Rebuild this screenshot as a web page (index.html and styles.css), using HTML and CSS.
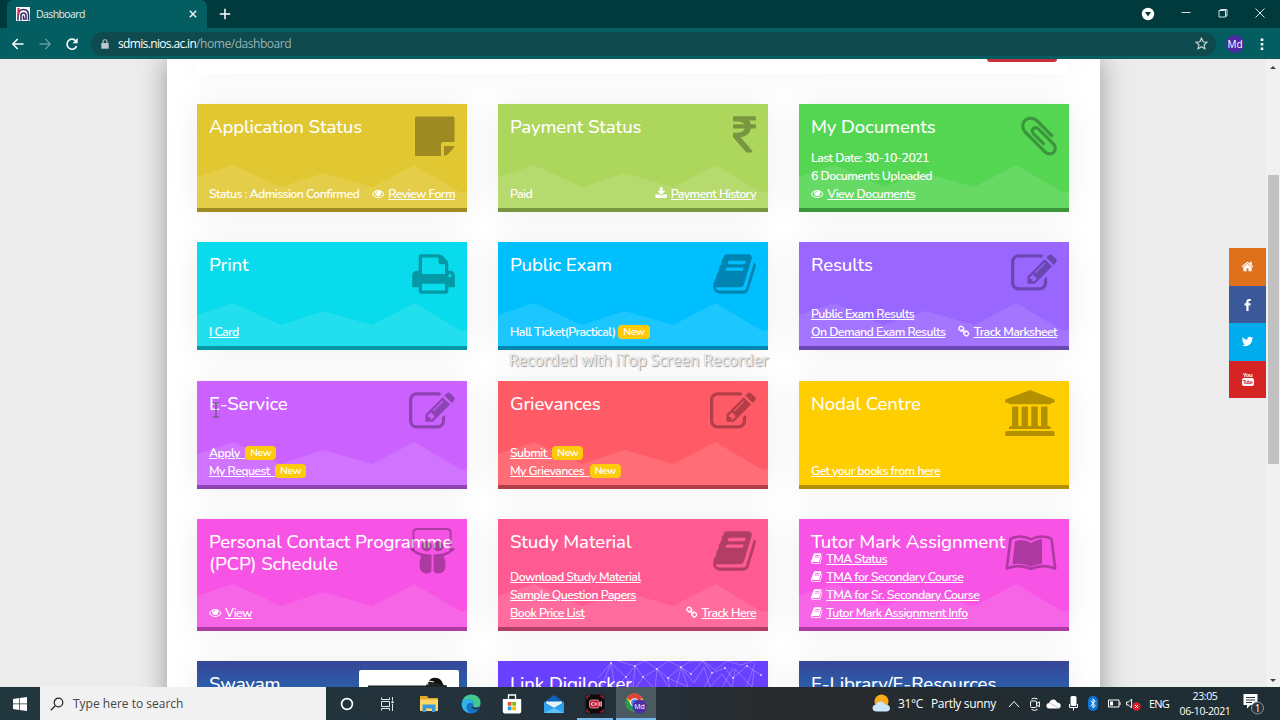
FILE: index.html
```html
<!DOCTYPE html>
<html lang="en">

<head>
    <meta charset="UTF-8">
    <meta name="viewport" content="width=device-width, initial-scale=1.0">
    <title>Dashboard</title>
    <link rel="stylesheet" href="styles.css">
</head>

<body>
    <!-- icon symbols -->
    <svg class="symbols" width="0" height="0">
        <symbol id="eye" viewBox="0 0 1792 1792"><path d="M1664 960q-152-236-381-353 61 104 61 225 0 185-131.5 316.5t-316.5 131.5-316.5-131.5-131.5-316.5q0-121 61-225-229 117-381 353 133 205 333.5 326.5t434.5 121.5 434.5-121.5 333.5-326.5zm-720-384q0-20-14-34t-34-14q-125 0-214.5 89.5t-89.5 214.5q0 20 14 34t34 14 34-14 14-34q0-86 61-147t147-61q20 0 34-14t14-34zm848 384q0 34-20 69-140 230-376.5 368.5t-499.5 138.5-499.5-139-376.5-368q-20-35-20-69t20-69q140-229 376.5-368t499.5-139 499.5 139 376.5 368q20 35 20 69z"/></symbol>
        <symbol id="edit" viewBox="0 0 1792 1792"><path d="M888 1184l116-116-152-152-116 116v56h96v96h56zm440-720q-16-16-33 1l-350 350q-17 17-1 33t33-1l350-350q17-17 1-33zm80 594v190q0 119-84.5 203.5t-203.5 84.5h-832q-119 0-203.5-84.5t-84.5-203.5v-832q0-119 84.5-203.5t203.5-84.5h832q63 0 117 25 15 7 18 23 3 17-9 29l-49 49q-14 14-32 8-23-6-45-6h-832q-66 0-113 47t-47 113v832q0 66 47 113t113 47h832q66 0 113-47t47-113v-126q0-13 9-22l64-64q15-15 35-7t20 29zm-96-738l288 288-672 672h-288v-288zm444 132l-92 92-288-288 92-92q28-28 68-28t68 28l152 152q28 28 28 68t-28 68z"/></symbol>
        <symbol id="book" viewBox="64 0 1664 1792"><path d="M1703 478q40 57 18 129l-275 906q-19 64-76.5 107.5t-122.5 43.5h-923q-77 0-148.5-53.5t-99.5-131.5q-24-67-2-127 0-4 3-27t4-37q1-8-3-21.5t-3-19.5q2-11 8-21t16.5-23.5 16.5-23.5q23-38 45-91.5t30-91.5q3-10 .5-30t-.5-28q3-11 17-28t17-23q21-36 42-92t25-90q1-9-2.5-32t.5-28q4-13 22-30.5t22-22.5q19-26 42.5-84.5t27.5-96.5q1-8-3-25.5t-2-26.5q2-8 9-18t18-23 17-21q8-12 16.5-30.5t15-35 16-36 19.5-32 26.5-23.5 36-11.5 47.5 5.5l-1 3q38-9 51-9h761q74 0 114 56t18 130l-274 906q-36 119-71.5 153.5t-128.5 34.5h-869q-27 0-38 15-11 16-1 43 24 70 144 70h923q29 0 56-15.5t35-41.5l300-987q7-22 5-57 38 15 59 43zm-1064 2q-4 13 2 22.5t20 9.5h608q13 0 25.5-9.5t16.5-22.5l21-64q4-13-2-22.5t-20-9.5h-608q-13 0-25.5 9.5t-16.5 22.5zm-83 256q-4 13 2 22.5t20 9.5h608q13 0 25.5-9.5t16.5-22.5l21-64q4-13-2-22.5t-20-9.5h-608q-13 0-25.5 9.5t-16.5 22.5z"/></symbol>
        <symbol id="print" viewBox="64 0 1664 1792"><path d="M448 1536h896v-256h-896v256zm0-640h896v-384h-160q-40 0-68-28t-28-68v-160h-640v640zm1152 64q0-26-19-45t-45-19-45 19-19 45 19 45 45 19 45-19 19-45zm128 0v416q0 13-9.5 22.5t-22.5 9.5h-224v160q0 40-28 68t-68 28h-960q-40 0-68-28t-28-68v-160h-224q-13 0-22.5-9.5t-9.5-22.5v-416q0-79 56.5-135.5t135.5-56.5h64v-544q0-40 28-68t68-28h672q40 0 88 20t76 48l152 152q28 28 48 76t20 88v256h64q79 0 135.5 56.5t56.5 135.5z"/></symbol>
        <symbol id="rupee" viewBox="448 0 898 1792"><path d="M1345 470v102q0 14-9 23t-23 9h-168q-23 144-129 234t-276 110q167 178 459 536 14 16 4 34-8 18-29 18h-195q-16 0-25-12-306-367-498-571-9-9-9-22v-127q0-13 9.5-22.5t22.5-9.5h112q132 0 212.5-43t102.5-125h-427q-14 0-23-9t-9-23v-102q0-14 9-23t23-9h413q-57-113-268-113h-145q-13 0-22.5-9.5t-9.5-22.5v-133q0-14 9-23t23-9h832q14 0 23 9t9 23v102q0 14-9 23t-23 9h-233q47 61 64 144h171q14 0 23 9t9 23z"/></symbol>
        <symbol id="clip" viewBox="192 0 1408 1792"><path d="M1596 1385q0 117-79 196t-196 79q-135 0-235-100l-777-776q-113-115-113-271 0-159 110-270t269-111q158 0 273 113l605 606q10 10 10 22 0 16-30.5 46.5t-46.5 30.5q-13 0-23-10l-606-607q-79-77-181-77-106 0-179 75t-73 181q0 105 76 181l776 777q63 63 145 63 64 0 106-42t42-106q0-82-63-145l-581-581q-26-24-60-24-29 0-48 19t-19 48q0 32 25 59l410 410q10 10 10 22 0 16-31 47t-47 31q-12 0-22-10l-410-410q-63-61-63-149 0-82 57-139t139-57q88 0 149 63l581 581q100 98 100 235z"/></symbol>
        <symbol id="download" viewBox="0 0 1792 1792"><path d="M1344 1344q0-26-19-45t-45-19-45 19-19 45 19 45 45 19 45-19 19-45zm256 0q0-26-19-45t-45-19-45 19-19 45 19 45 45 19 45-19 19-45zm128-224v320q0 40-28 68t-68 28h-1472q-40 0-68-28t-28-68v-320q0-40 28-68t68-28h465l135 136q58 56 136 56t136-56l136-136h464q40 0 68 28t28 68zm-325-569q17 41-14 70l-448 448q-18 19-45 19t-45-19l-448-448q-31-29-14-70 17-39 59-39h256v-448q0-26 19-45t45-19h256q26 0 45 19t19 45v448h256q42 0 59 39z"/></symbol>
        <symbol id="chain" viewBox="64 0 1664 1792"><path d="M1520 1216q0-40-28-68l-208-208q-28-28-68-28-42 0-72 32 3 3 19 18.5t21.5 21.5 15 19 13 25.5 3.5 27.5q0 40-28 68t-68 28q-15 0-27.5-3.5t-25.5-13-19-15-21.5-21.5-18.5-19q-33 31-33 73 0 40 28 68l206 207q27 27 68 27 40 0 68-26l147-146q28-28 28-67zm-703-705q0-40-28-68l-206-207q-28-28-68-28-39 0-68 27l-147 146q-28 28-28 67 0 40 28 68l208 208q27 27 68 27 42 0 72-31-3-3-19-18.5t-21.5-21.5-15-19-13-25.5-3.5-27.5q0-40 28-68t68-28q15 0 27.5 3.5t25.5 13 19 15 21.5 21.5 18.5 19q33-31 33-73zm895 705q0 120-85 203l-147 146q-83 83-203 83-121 0-204-85l-206-207q-83-83-83-203 0-123 88-209l-88-88q-86 88-208 88-120 0-204-84l-208-208q-84-84-84-204t85-203l147-146q83-83 203-83 121 0 204 85l206 207q83 83 83 203 0 123-88 209l88 88q86-88 208-88 120 0 204 84l208 208q84 84 84 204z"/></symbol>
        <symbol id="home" viewBox="0 0 1792 1792"><path d="M1472 992v480q0 26-19 45t-45 19h-384v-384h-256v384h-384q-26 0-45-19t-19-45v-480q0-1 .5-3t.5-3l575-474 575 474q1 2 1 6zm223-69l-62 74q-8 9-21 11h-3q-13 0-21-7l-692-577-692 577q-12 8-24 7-13-2-21-11l-62-74q-8-10-7-23.5t11-21.5l719-599q32-26 76-26t76 26l244 204v-195q0-14 9-23t23-9h192q14 0 23 9t9 23v408l219 182q10 8 11 21.5t-7 23.5z"/></symbol>
        <symbol id="facebook" viewBox="0 0 1792 1792"><path d="M1343 140v264h-157q-86 0-116 36t-30 108v189h293l-39 296h-254v759h-306v-759h-255v-296h255v-218q0-186 104-288.5t277-102.5q147 0 228 12z"/></symbol>
        <symbol id="twitter" viewBox="0 0 1792 1792"><path d="M1684 408q-67 98-162 167 1 14 1 42 0 130-38 259.5t-115.5 248.5-184.5 210.5-258 146-323 54.5q-271 0-496-145 35 4 78 4 225 0 401-138-105-2-188-64.5t-114-159.5q33 5 61 5 43 0 85-11-112-23-185.5-111.5t-73.5-205.5v-4q68 38 146 41-66-44-105-115t-39-154q0-88 44-163 121 149 294.5 238.5t371.5 99.5q-8-38-8-74 0-134 94.5-228.5t228.5-94.5q140 0 236 102 109-21 205-78-37 115-142 178 93-10 186-50z"/></symbol>
        <symbol id="note" viewBox="0 0 40 46"><path d="M1.5 3.5H38q1.5 0 1.5 1.5v24H28.500q-2.500 0-2.500 2.500V43H1.500Q0 43 0 41.500V5Q0 3.500 1.500 3.500zM29 33h10.300q-.5 2-1.600 3.200l-5 5q-1.500 1.400-3.700 1.600z"/></symbol>
        <symbol id="bank" viewBox="0 0 50 47"><path d="M25 0l24.500 9.500v3.200h-3.300q0 1.600-1.600 1.600H5.200q-1.600 0-1.600-1.600H.3V9.500zM7 16.500h6.300V36h3.300V16.500H23V36h3.300V16.500h6.500V36H36V16.500h6.500V36h1.600q1.600 0 1.600 1.600v1.500H3.900v-1.500Q3.900 36 5.500 36H7zM1.900 41h46q1.600 0 1.600 1.600V46H.3v-3.400Q.3 41 1.900 41z"/></symbol>
        <symbol id="leanpub" viewBox="0 0 52 36"><path fill="none" stroke="currentColor" stroke-width="2.600" stroke-linejoin="round" d="M26 4.300Q19 .5 12 1.800q-3.500.5-6.500 2L1.800 33.500Q14 28.500 26 33.800q12-5.300 24.200-.3L46.500 3.800q-3-1.500-6.500-2-7-1.300-14 2.500z"/><path d="M26 8.200q5-3.700 11-4v24.500q-6 .3-11 3-8.500-4-18.500-2.500L10 6.500q8-3.500 16 1.700z"/></symbol>
        <symbol id="slideshare" viewBox="0 0 45 47"><path fill="none" stroke="currentColor" stroke-width="1.900" d="M3 23V5Q3 1 7 1h30q4 0 4 4v18"/><circle cx="16.500" cy="18.500" r="5.300"/><circle cx="28.500" cy="18.500" r="5.300"/><path d="M0 20.500q-.5 1.200 1 2.600Q5 27 11 28.500q-3 9-1 14 2 4.500 7.500 4 4-.5 4-4V27.200q-4.500-.5-8-.9Q7 25.500 1.500 20.500zM45 20.500q.5 1.200-1 2.600-4 3.900-10 5.400 3 9 1 14-2 4.500-7.500 4-4-.5-4-4V27.200q4.500-.5 8-.9 6.500-.8 12-5.800z"/></symbol>
        <symbol id="wave" viewBox="0 0 270 43" preserveAspectRatio="none"><path d="M0 12L36 0l48 22 42-14 49 14L217 0l47 28 6-2v17H0z"/></symbol>
    </svg>

    <!-- browser header -->
    <div class="tabstrip">
        <div class="tab">
            <svg width="14" height="14" viewBox="0 0 14 14"><path fill="#fff" d="M0 0h14v14H0z"/><path fill="none" stroke="#302966" stroke-width="1.500" d="M2 13.500V8q.5-5.500 5.500-5.500T12.500 8v5.500M5 13.500V8.500q0-2.500 2.500-2.500T10 8.500v3.500H7.500V8.500"/><path fill="#d72a49" d="M1.500 1h2v7h-2z"/></svg>
            <span>Dashboard</span>
            <svg class="tab-close" width="8" height="8" viewBox="0 0 8 8"><path stroke="#e8f2f2" stroke-width="1.500" d="M.8.8l6.400 6.400M7.200.8L.8 7.200"/></svg>
        </div>
        <svg class="new-tab" width="12" height="12" viewBox="0 0 12 12"><path stroke="#fff" stroke-width="1.500" d="M6 .8v10.400M.8 6h10.400"/></svg>
        <div class="window-btns">
            <svg width="14" height="14" viewBox="0 0 14 14"><circle cx="7" cy="7" r="6.200" fill="#fff"/><path fill="#003a3d" d="M4 5h6L7 9.500z"/></svg>
            <svg width="12" height="12" viewBox="0 0 12 12"><path stroke="#d5e1e1" d="M1.500 4.500h9"/></svg>
            <svg width="12" height="12" viewBox="0 0 12 12"><path fill="none" stroke="#d5e1e1" d="M2 2.500h6.500V9H2zM3.500 2.500v-1h6.500v6.500H8.500"/></svg>
            <svg width="12" height="12" viewBox="0 0 12 12"><path stroke="#d5e1e1" d="M1.500.5l9 9M10.500.5l-9 9"/></svg>
        </div>
    </div>
    <div class="toolbar">
        <svg width="14" height="14" viewBox="0 0 14 14"><path fill="none" stroke="#fff" stroke-width="1.500" d="M12.500 7H2M6.700 2L1.800 7l4.900 5"/></svg>
        <svg class="fwd" width="14" height="14" viewBox="0 0 14 14"><path fill="none" stroke="#66999c" stroke-width="1.300" d="M1.500 7H12M7.300 2l4.900 5-4.900 5"/></svg>
        <svg width="14" height="14" viewBox="0 0 14 14"><path fill="none" stroke="#fff" stroke-width="1.600" d="M11.600 9.200A5 5 0 1 1 10.900 4"/><path fill="#fff" d="M12.700 1v5.200H7.500z"/></svg>
        <div class="address">
            <svg width="8" height="10" viewBox="0 0 8 10"><path fill="#bcc9cc" d="M.3 4h7.400v5.700H.3z"/><path fill="none" stroke="#bcc9cc" stroke-width="1.100" d="M2 4V2.600Q2 .8 4 .8t2 1.800V4"/></svg>
            <p><b>sdmis.nios.ac.in</b>/home/dashboard</p>
            <svg class="star" width="13" height="13" viewBox="0 0 13 13"><path fill="none" stroke="#c9d6d8" stroke-width="1.200" d="M6.500 1.200l1.600 3.600 3.900.4-2.900 2.600.8 3.900-3.400-2-3.400 2 .8-3.900L1 5.200l3.900-.4z"/></svg>
        </div>
        <div class="avatar">Md</div>
        <svg class="dots" width="4" height="14" viewBox="0 0 4 14"><path fill="#fff" d="M.7 1.500h2.600v2.400H.7zM.7 6h2.600v2.400H.7zM.7 10.500h2.600v2.400H.7z"/></svg>
    </div>

    <!-- page -->
    <div class="page">
        <div class="panel">
            <div class="profile"><span class="logout"></span></div>
            <div class="cards">
                <div class="card mustard">
                    <svg class="wave"><use href="#wave"/></svg>
                    <svg class="icon" width="40"><use href="#note"/></svg>
                    <h3>Application Status</h3>
                    <div class="line"><span>Status : Admission Confirmed</span><span><svg class="fa"><use href="#eye"/></svg> <a href="#">Review Form</a></span></div>
                </div>
                <div class="card lime">
                    <svg class="wave"><use href="#wave"/></svg>
                    <svg class="icon" width="23"><use href="#rupee"/></svg>
                    <h3>Payment Status</h3>
                    <div class="line"><span>Paid</span><span><svg class="fa"><use href="#download"/></svg> <a href="#">Payment History</a></span></div>
                </div>
                <div class="card green">
                    <svg class="wave"><use href="#wave"/></svg>
                    <svg class="icon" width="36"><use href="#clip"/></svg>
                    <h3>My Documents</h3>
                    <div class="line"><span>Last Date: 30-10-2021</span></div>
                    <div class="line"><span>6 Documents Uploaded</span></div>
                    <div class="line"><span><svg class="fa"><use href="#eye"/></svg> <a href="#">View Documents</a></span></div>
                </div>
                <div class="card cyan">
                    <svg class="wave"><use href="#wave"/></svg>
                    <svg class="icon" width="43"><use href="#print"/></svg>
                    <h3>Print</h3>
                    <div class="line"><a href="#">I Card</a></div>
                </div>
                <div class="card blue">
                    <svg class="wave"><use href="#wave"/></svg>
                    <svg class="icon" width="43"><use href="#book"/></svg>
                    <h3>Public Exam</h3>
                    <div class="line"><span>Hall Ticket(Practical) <i class="badge">New</i></span></div>
                </div>
                <div class="card violet">
                    <svg class="wave"><use href="#wave"/></svg>
                    <svg class="icon" width="46"><use href="#edit"/></svg>
                    <h3>Results</h3>
                    <div class="line"><a href="#">Public Exam Results</a></div>
                    <div class="line"><a href="#">On Demand Exam Results</a><span><svg class="fa chain"><use href="#chain"/></svg> <a href="#">Track Marksheet</a></span></div>
                </div>
                <div class="card purple">
                    <svg class="wave"><use href="#wave"/></svg>
                    <svg class="icon" width="46"><use href="#edit"/></svg>
                    <h3>E-Service</h3>
                    <div class="line"><a href="#">Apply&nbsp; <i class="badge">New</i></a></div>
                    <div class="line"><a href="#">My Request&nbsp; <i class="badge">New</i></a></div>
                </div>
                <div class="card coral">
                    <svg class="wave"><use href="#wave"/></svg>
                    <svg class="icon" width="46"><use href="#edit"/></svg>
                    <h3>Grievances</h3>
                    <div class="line"><a href="#">Submit&nbsp; <i class="badge">New</i></a></div>
                    <div class="line"><a href="#">My Grievances&nbsp; <i class="badge">New</i></a></div>
                </div>
                <div class="card yellow">
                    <svg class="icon bank" width="50"><use href="#bank"/></svg>
                    <h3>Nodal Centre</h3>
                    <div class="line"><a href="#">Get your books from here</a></div>
                </div>
                <div class="card pink tall">
                    <svg class="wave"><use href="#wave"/></svg>
                    <svg class="icon" width="45"><use href="#slideshare"/></svg>
                    <h3>Personal Contact Programme (PCP) Schedule</h3>
                    <div class="line"><span><svg class="fa"><use href="#eye"/></svg> <a href="#">View</a></span></div>
                </div>
                <div class="card rose tall">
                    <svg class="wave"><use href="#wave"/></svg>
                    <svg class="icon" width="43"><use href="#book"/></svg>
                    <h3>Study Material</h3>
                    <div class="line"><a href="#">Download Study Material</a></div>
                    <div class="line"><a href="#">Sample Question Papers</a></div>
                    <div class="line"><a href="#">Book Price List</a><span><svg class="fa chain"><use href="#chain"/></svg> <a href="#">Track Here</a></span></div>
                </div>
                <div class="card pink tall">
                    <svg class="wave"><use href="#wave"/></svg>
                    <svg class="icon lean" width="52"><use href="#leanpub"/></svg>
                    <h3>Tutor Mark Assignment</h3>
                    <div class="line"><span><svg class="fa chain"><use href="#book"/></svg> <a href="#">TMA Status</a></span></div>
                    <div class="line"><span><svg class="fa chain"><use href="#book"/></svg> <a href="#">TMA for Secondary Course</a></span></div>
                    <div class="line"><span><svg class="fa chain"><use href="#book"/></svg> <a href="#">TMA for Sr. Secondary Course</a></span></div>
                    <div class="line"><span><svg class="fa chain"><use href="#book"/></svg> <a href="#">Tutor Mark Assignment Info</a></span></div>
                </div>
                <div class="card navy">
                    <h3>Swayam</h3>
                    <div class="swayam-logo">
                        <svg width="100" height="40" viewBox="0 0 100 40"><path fill="#111" d="M69 13q2-6 9-5 4 .500 6 6l2 4H68l-1-3z"/><path stroke="#fff" d="M69 11l6 1M68 14l7 1"/><path fill="#222" d="M9 15.500h59l4-3 16 3v3H9z"/></svg>
                    </div>
                </div>
                <div class="card indigo">
                    <svg class="net" width="170" height="27" viewBox="0 0 170 27"><g fill="none" stroke="#fff" stroke-opacity=".42" stroke-width=".6"><path d="M0 17l13-15 15 14 9-11 8 11 14-8 11 9 13-11 10 7 12-13 9 12 13-5 8 10 14-12 14 9M3 27l10-25 4 25 11-11 8 13 9-13 12 12 2-20 13 20-2-11 20 9-7-20 13 16 10-16 6 20 12-13 10 14 3-19 17 18 2-17M20 0l17 5L47 0l12 8L70 0l13 6 10-6 12 0 12 9 12-9 14 4 12-4M37 5l-2 22M83 6l-5 21M114 12l-8 15M135 7l-11 20M157 2l-9 25"/></g><g fill="#fff" fill-opacity=".75"><circle cx="13" cy="2" r="1"/><circle cx="28" cy="16" r="1"/><circle cx="37" cy="5" r="1"/><circle cx="45" cy="16" r="1"/><circle cx="59" cy="8" r="1"/><circle cx="70" cy="17" r="1"/><circle cx="83" cy="6" r="1"/><circle cx="93" cy="13" r="1"/><circle cx="114" cy="12" r="1"/><circle cx="127" cy="7" r="1"/><circle cx="135" cy="17" r="1"/><circle cx="149" cy="5" r="1"/><circle cx="163" cy="14" r="1"/></g></svg>
                    <h3>Link Digilocker</h3>
                </div>
                <div class="card navy">
                    <h3>E-Library/E-Resources</h3>
                </div>
            </div>
        </div>
        <div class="social">
            <a class="s-home" href="#"><svg><use href="#home"/></svg></a>
            <a class="s-fb" href="#"><svg><use href="#facebook"/></svg></a>
            <a class="s-tw" href="#"><svg><use href="#twitter"/></svg></a>
            <a class="s-yt" href="#"><span>You</span><b>Tube</b></a>
        </div>
        <div class="scrollbar"><i class="up"></i><span class="thumb"></span><i class="down"></i></div>
        <div class="watermark">Recorded with iTop Screen Recorder</div>
        <svg class="cursor" width="8" height="16" viewBox="0 0 8 16"><path fill="none" stroke="#6b5a70" stroke-width="1.300" d="M.8 1q2.600-.3 3.200 1 .6-1.300 3.200-1M4 2v12M.8 15q2.600.3 3.200-1 .6 1.300 3.200 1"/></svg>
    </div>

    <!-- taskbar -->
    <div class="taskbar">
        <div class="start"><svg width="14" height="14" viewBox="0 0 14 14"><path fill="#fff" d="M0 2l6-.9v5.500H0zM6.700 1L14 0v6.600H6.700zM0 7.300h6v5.600L0 12zM6.700 7.300H14V14l-7.300-1z"/></svg></div>
        <div class="search">
            <svg width="14" height="14" viewBox="0 0 14 14"><circle cx="8.500" cy="5.500" r="4.300" fill="none" stroke="#222" stroke-width="1.200"/><path stroke="#222" stroke-width="1.300" d="M5.400 8.600L.8 13.200"/></svg>
            <span>Type here to search</span>
        </div>
        <div class="apps">
            <div class="app"><svg width="14" height="14" viewBox="0 0 14 14"><circle cx="7" cy="7" r="5.400" fill="none" stroke="#fff" stroke-width="1.700"/></svg></div>
            <div class="app"><svg width="14" height="14" viewBox="0 0 14 14"><path fill="none" stroke="#e3e7e8" d="M.5.5v2h8v-2M.5 4.500h8v5h-8zM.5 13.500v-2h8v2M11.500 0v3.500M11.500 7v7"/><path fill="#fff" d="M10.500 4.200h2v2h-2z"/></svg></div>
            <div class="app"><svg width="20" height="18" viewBox="0 0 20 18"><path fill="#e5a82c" d="M1 1h7l1.500 2H19v6H1z"/><path fill="#ffd766" d="M1 4.500h18V16H1z"/><path fill="#3c98dc" d="M3.500 9.500h13V17H13v-3.500H7V17H3.500z"/></svg></div>
            <div class="app"><svg width="20" height="20" viewBox="0 0 20 20"><circle cx="10" cy="10" r="9.500" fill="#1673c8"/><path fill="#43c98d" d="M1 7.500Q3.500.5 10.500.5q9 .8 9 8.500 0 4-5 4.500-3-.3-2-2.500 1-5-4-5.500Q4 5.300 1 7.500z"/><path fill="#2fb4e6" d="M.6 9.500q2-5.700 8-4 4 1.300 3.800 4.500Q8 7 6 11t3 8Q.5 18 .6 9.500z"/><path fill="#24343c" d="M12 12.500q2.500 2.500 7 .3-.8 1.800-2 2.500-5 1-6.500-2.300z"/></svg></div>
            <div class="app"><svg width="20" height="20" viewBox="0 0 20 20"><path fill="none" stroke="#fff" stroke-width="1.300" d="M6.500 6V1h7v5"/><path fill="#fff" d="M.8 5h18.400v12.500q0 2-2 2H2.800q-2 0-2-2z"/><path fill="#e8532b" d="M5.800 8h3.700v3.700H5.800z"/><path fill="#7fba00" d="M10.300 8H14v3.700h-3.700z"/><path fill="#1f9ce8" d="M5.800 12.500h3.700v3.700H5.800z"/><path fill="#ffb900" d="M10.300 12.500H14v3.700h-3.700z"/></svg></div>
            <div class="app"><svg width="20" height="20" viewBox="0 0 20 20"><path fill="#0f63b8" d="M0 8l10-7 10 7v11H0z"/><path fill="#e7f3fb" d="M2 7.500h16v2L10 14 2 9.500z"/><path fill="#2ea2ea" d="M0 8l10 6 10-6v11H0z"/><path fill="#5ec3f6" d="M10 14L0 19h20z"/></svg></div>
            <div class="app open"><svg width="20" height="20" viewBox="0 0 20 20"><rect x=".5" y=".5" width="19" height="19" rx="3" fill="#0d0a0b"/><path fill="none" stroke="#d52a3a" d="M2 5V2h3M15 2h3v3M18 15v3h-3M5 18H2v-3"/><rect x="4.500" y="6" width="9.500" height="8" rx="2" fill="#c32038" stroke="#f3a0ab" stroke-width=".8"/><path fill="#e8455a" stroke="#fff" stroke-width=".6" d="M14 9l2.500-1.500v5L14 11z"/><path fill="none" stroke="#fff" stroke-width=".8" d="M8.500 8.800Q6.300 8 6.300 10t2.200 1.300M9.500 8.500l2.500 3M12 8.500l-2.500 3"/></svg></div>
            <div class="app open current"><svg width="22" height="21" viewBox="0 0 22 21"><circle cx="9.500" cy="9.500" r="9" fill="#f6c630"/><path fill="#df4437" d="M1.700 5A9 9 0 0 1 17.300 5L9.500 9.500z"/><path fill="#249a57" d="M1.700 5a9 9 0 0 0 6.800 13.500l3-6-6-1z"/><circle cx="9.500" cy="9.500" r="4.300" fill="#fff"/><circle cx="9.500" cy="9.500" r="3.300" fill="#3f83ee"/><circle cx="14.500" cy="13.500" r="7" fill="#4b2fa8"/><text x="14.500" y="16.300" text-anchor="middle" class="mini">Md</text></svg></div>
        </div>
        <div class="tray">
            <svg width="19" height="19" viewBox="0 0 19 19"><circle cx="9.500" cy="7.500" r="7" fill="#f8a91e"/><path fill="#c9e7f7" d="M4 17.500q-3.500-.5-3.500-3.500T4 10.500q1-3 4.500-3 3.300 0 4.500 3 5 .2 5 3.700 0 3-3.500 3.300z"/></svg>
            <span class="temp">31°C</span><span class="sunny">Partly sunny</span>
            <svg class="t-up" width="12" height="8" viewBox="0 0 12 8"><path fill="none" stroke="#fff" d="M1 7l5-5.500L11 7"/></svg>
            <svg class="t-meet" width="10" height="14" viewBox="0 0 10 14"><rect x=".6" y="4" width="6" height="6.500" rx="1" fill="none" stroke="#fff"/><path fill="none" stroke="#fff" d="M7 6.300l2.400-1.500v5L7 8.300M1.500 2q3-1.800 6 0M1.500 12.500q3 1.800 6 0"/></svg>
            <svg class="t-cloud" width="15" height="11" viewBox="0 0 15 11"><path fill="#fff" d="M3 10.500Q.3 10 .4 7.500.5 5 3.200 5 4 1.500 7.300 1.500q2.700 0 3.700 3 3.700.2 3.700 3.200 0 2.500-2.700 2.800z"/><path stroke="#b9c5ca" d="M3.500 5l9 5"/></svg>
            <svg class="t-mic" width="11" height="15" viewBox="0 0 11 15"><rect x="2.500" y="0" width="6" height="10" rx="1.500" fill="#fff"/><path fill="none" stroke="#fff" d="M1.500 8v3.500h8V8M5.500 11.500v3"/></svg>
            <svg class="t-bt" width="10" height="15" viewBox="0 0 10 15"><rect width="10" height="15" rx="5" fill="#0879d9"/><path fill="none" stroke="#fff" d="M2.700 4.700l4.500 5L5 11.800V3l2.200 2.200-4.500 5"/></svg>
            <svg class="t-bat" width="14" height="9" viewBox="0 0 14 9"><path fill="none" stroke="#fff" d="M1.500 1h10.500v7H1.500zM13 3v3"/><path fill="#fff" d="M3 2.500h3v4H3z"/></svg>
            <svg class="t-vol" width="15" height="14" viewBox="0 0 15 14"><path fill="none" stroke="#fff" d="M.6 5h2l3-3v9l-3-3h-2z"/><circle cx="10.500" cy="9.500" r="4.200" fill="#d8202f"/><path stroke="#fff" d="M9 8l3 3M12 8l-3 3"/></svg>
            <span class="eng">ENG</span>
            <div class="clock"><p>23:05</p><p>06-10-2021</p></div>
            <svg class="t-note" width="21" height="22" viewBox="0 0 21 22"><path fill="#fff" d="M.5 1h14v11H7.500L4 15.500V12H.5z"/><path stroke="#26343b" d="M3 4.500h9M3 7h9M3 9.500h6"/><circle cx="14.500" cy="15" r="6" fill="#26343b" stroke="#8c989d"/><text x="14.500" y="18.600" text-anchor="middle" class="count">1</text></svg>
        </div>
    </div>
</body>

</html>
```
FILE: styles.css
```css
* {
    margin: 0;
    padding: 0;
    box-sizing: border-box;
}

body {
    display: flex;
    flex-direction: column;
    width: 1280px;
    height: 720px;
    overflow: hidden;
    font-family: Nunito, Lato, sans-serif;
}

svg {
    display: block;
    flex-shrink: 0;
}

.symbols {
    position: absolute;
}

/* browser header */
.tabstrip {
    display: flex;
    align-items: center;
    height: 28px;
    background: #003a3d;
    font-family: "Open Sans", sans-serif;
}

.tab {
    display: flex;
    align-items: center;
    width: 200px;
    height: 28px;
    margin-left: 7px;
    padding: 0 10px 0 9px;
    border-radius: 6px 6px 0 0;
    background: #045d61;
    color: #e3eeee;
    font-size: 10.5px;
}

.tab span {
    margin-left: 6px;
    letter-spacing: -.6px;
}

.tab-close {
    margin-left: auto;
}

.new-tab {
    margin-left: 12px;
}

.window-btns {
    display: flex;
    align-items: center;
    gap: 25px;
    margin-left: auto;
    padding-right: 14px;
}

.toolbar {
    display: flex;
    align-items: center;
    height: 31px;
    padding-left: 11px;
    background: #045d61;
    font-family: "Open Sans", sans-serif;
}

.toolbar .fwd {
    margin: 0 13px;
}

.address {
    display: flex;
    align-items: center;
    width: 1125px;
    height: 24px;
    margin-left: 12px;
    padding: 0 8px 0 10px;
    border-radius: 12px;
    background: #0e4a4e;
    color: #9bb3b5;
    font-size: 12px;
}

.address p {
    margin-left: 9px;
    letter-spacing: -.45px;
}

.address b {
    color: #fff;
    font-weight: normal;
    letter-spacing: -.65px;
}

.star {
    margin-left: auto;
}

.avatar {
    width: 18px;
    height: 18px;
    margin-left: 10px;
    border-radius: 50%;
    background: #4c2ba3;
    color: #fff;
    font-size: 10px;
    line-height: 18px;
    text-align: center;
}

.dots {
    margin-left: 16px;
}

/* page */
.page {
    position: relative;
    height: 628px;
    overflow: hidden;
    background: #ececec;
}

.panel {
    width: 933px;
    height: 700px;
    margin-left: 167px;
    padding: 0 30px 0 29.500px;
    background: #fff;
    box-shadow: 0 0 26px rgba(0, 0, 0, .36);
}

.profile {
    height: 15px;
    margin-bottom: 30px;
    background: #fff;
    box-shadow: 0 0 30px rgba(0, 0, 0, .06);
}

.logout {
    display: block;
    width: 70px;
    height: 3px;
    margin-left: 790.500px;
    border-radius: 0 0 3px 3px;
    background: #c9303e;
}

.cards {
    display: grid;
    grid-template-columns: repeat(3, 270.500px);
    gap: 30.300px 30.500px;
}

.card {
    position: relative;
    display: flex;
    flex-direction: column;
    height: 108.100px;
    padding: 12px 12px 5.200px 12.500px;
    border-bottom: 4px solid rgba(0, 0, 0, .3);
    background-clip: border-box;
    background-origin: border-box;
    color: #fff;
    box-shadow: 0 0 30px rgba(0, 0, 0, .07);
}

.card.tall {
    height: 111.800px;
}

.card h3 {
    margin: 0 -4px auto 0;
    font-size: 18.600px;
    font-weight: 500;
    line-height: 22px;
    letter-spacing: -.12px;
}

.card.tall h3 {
    margin-bottom: -4px;
}

.card.tall h3 + .line {
    margin-top: auto;
}

.line {
    position: relative;
    display: flex;
    justify-content: space-between;
    height: 18px;
    font-size: 12.300px;
    font-weight: 600;
    line-height: 18px;
    letter-spacing: -.56px;
    white-space: nowrap;
}

.line a {
    color: #fff;
    text-decoration: underline;
}

.fa {
    display: inline-block;
    width: 12.500px;
    height: 13px;
    margin-right: 1px;
    fill: #fff;
    vertical-align: -2px;
}

.fa.chain {
    width: 11.500px;
}

.icon {
    position: absolute;
    top: 8.500px;
    right: 12px;
    height: 46px;
    color: rgba(0, 0, 0, .3);
    fill: rgba(0, 0, 0, .3);
}

.icon.bank {
    right: 14.500px;
    height: 47px;
    top: 9px;
}

.icon.lean {
    top: 15.500px;
    height: 36px;
}

.wave {
    position: absolute;
    left: 0;
    bottom: 0;
    width: 100%;
    height: 43px;
    fill: rgba(255, 255, 255, .11);
}

.badge {
    display: inline-block;
    height: 14px;
    padding: 0 5px;
    border-radius: 4px;
    background: #fecb0c;
    font-size: 10.500px;
    font-style: normal;
    line-height: 14px;
    letter-spacing: -.35px;
    vertical-align: 1px;
}

.mustard { background-color: #e1c732; }
.lime { background-color: #add65c; }
.green { background-color: #55d653; }
.cyan { background-color: #08dbec; }
.blue { background-color: #00bfff; }
.violet { background-color: #9966ff; }
.purple { background-color: #cb62ff; }
.coral { background-color: #ff5b67; }
.yellow { background-color: #ffce00; }
.pink { background-color: #f753e5; }
.rose { background-color: #ff5a91; }
.navy { background-image: linear-gradient(#374697, #2b5da9 26px); }
.indigo { background-color: #6a40ff; }

.swayam-logo {
    position: absolute;
    top: 9px;
    right: 8px;
    width: 100px;
    height: 60px;
    border-radius: 2px;
    background: #fff;
}

.net {
    position: absolute;
    top: 0;
    right: 0;
}

.social {
    position: absolute;
    top: 189px;
    right: 14px;
    width: 37px;
}

.social a {
    display: flex;
    flex-direction: column;
    align-items: center;
    justify-content: center;
    height: 37.500px;
    color: #fff;
    text-decoration: none;
}

.social svg {
    width: 13px;
    height: 13px;
    fill: #fff;
}

.s-home { background: #df701c; }
.s-fb { background: #3b5998; }
.s-tw { background: #00acee; }
.s-yt { background: #d62424; }

.s-yt span,
.s-yt b {
    font: bold 6px/6px "Liberation Sans", sans-serif;
    letter-spacing: -.5px;
}

.s-yt b {
    width: 12px;
    height: 8px;
    border-radius: 2px;
    background: #fff;
    color: #d62424;
    font-size: 5px;
    line-height: 8px;
    text-align: center;
}

.scrollbar {
    position: absolute;
    top: 0;
    right: 0;
    display: flex;
    flex-direction: column;
    align-items: center;
    width: 14px;
    height: 628px;
    padding: 7px 0 5px;
    background: #f1f1f1;
}

.scrollbar i {
    border: 3px solid transparent;
}

.scrollbar .up {
    border-top: 0;
    border-bottom: 3px solid #444;
}

.scrollbar .down {
    margin-top: auto;
    border-bottom: 0;
    border-top: 3px solid #444;
}

.thumb {
    width: 11px;
    height: 289px;
    margin-top: 106px;
    background: #c1c1c1;
}

.watermark {
    position: absolute;
    top: 290.500px;
    left: 509px;
    color: #f2f2f2;
    font: 15.400px/21px "Open Sans", sans-serif;
    letter-spacing: -.03px;
    white-space: nowrap;
    text-shadow: 1px 1px 1px #999, 0 0 1px #aaa;
}

.cursor {
    position: absolute;
    top: 343px;
    left: 212px;
}

/* taskbar */
.taskbar {
    display: flex;
    height: 33px;
    background: linear-gradient(90deg, #21363d, #24303a 50%, #292a2b 62%, #1f2d34 85%);
    color: #fff;
    font-family: "Open Sans", sans-serif;
}

.start {
    display: flex;
    align-items: center;
    justify-content: center;
    width: 40px;
}

.search {
    display: flex;
    align-items: center;
    width: 286px;
    padding-left: 10px;
    background: #f1f1f1;
    color: #444;
    font-size: 12px;
}

.search span {
    margin-left: 9px;
}

.apps {
    display: flex;
}

.app {
    display: flex;
    align-items: center;
    justify-content: center;
    width: 41.400px;
}

.open {
    box-shadow: inset 0 -2px #76b9ed;
    margin: 0 3px;
    width: 35.400px;
}

.current {
    width: 40px;
    margin: 0;
    background: #4b5a61;
}

.mini {
    fill: #fff;
    font-size: 7px;
}

.count {
    fill: #fff;
    font-size: 10px;
}

.tray {
    display: flex;
    align-items: center;
    width: 408px;
    margin-left: auto;
    font-size: 12px;
    letter-spacing: -.35px;
    white-space: nowrap;
}

.temp { width: 26px; margin-left: 7px; }
.sunny { width: 64px; margin-left: 7px; }
.t-up { margin-left: 13px; }
.t-meet { margin-left: 10px; }
.t-cloud { margin-left: 6px; }
.t-mic { margin-left: 7px; }
.t-bt { margin-left: 9px; }
.t-bat { margin-left: 9px; }
.t-vol { margin-left: 5px; }
.eng { width: 20px; margin-left: 8px; font-size: 11px; letter-spacing: -.8px; }

.clock {
    width: 52px;
    margin-left: 10px;
    font-size: 10.500px;
    line-height: 15px;
    letter-spacing: -.4px;
    text-align: center;
}

.t-note { margin-left: 12px; }
```
